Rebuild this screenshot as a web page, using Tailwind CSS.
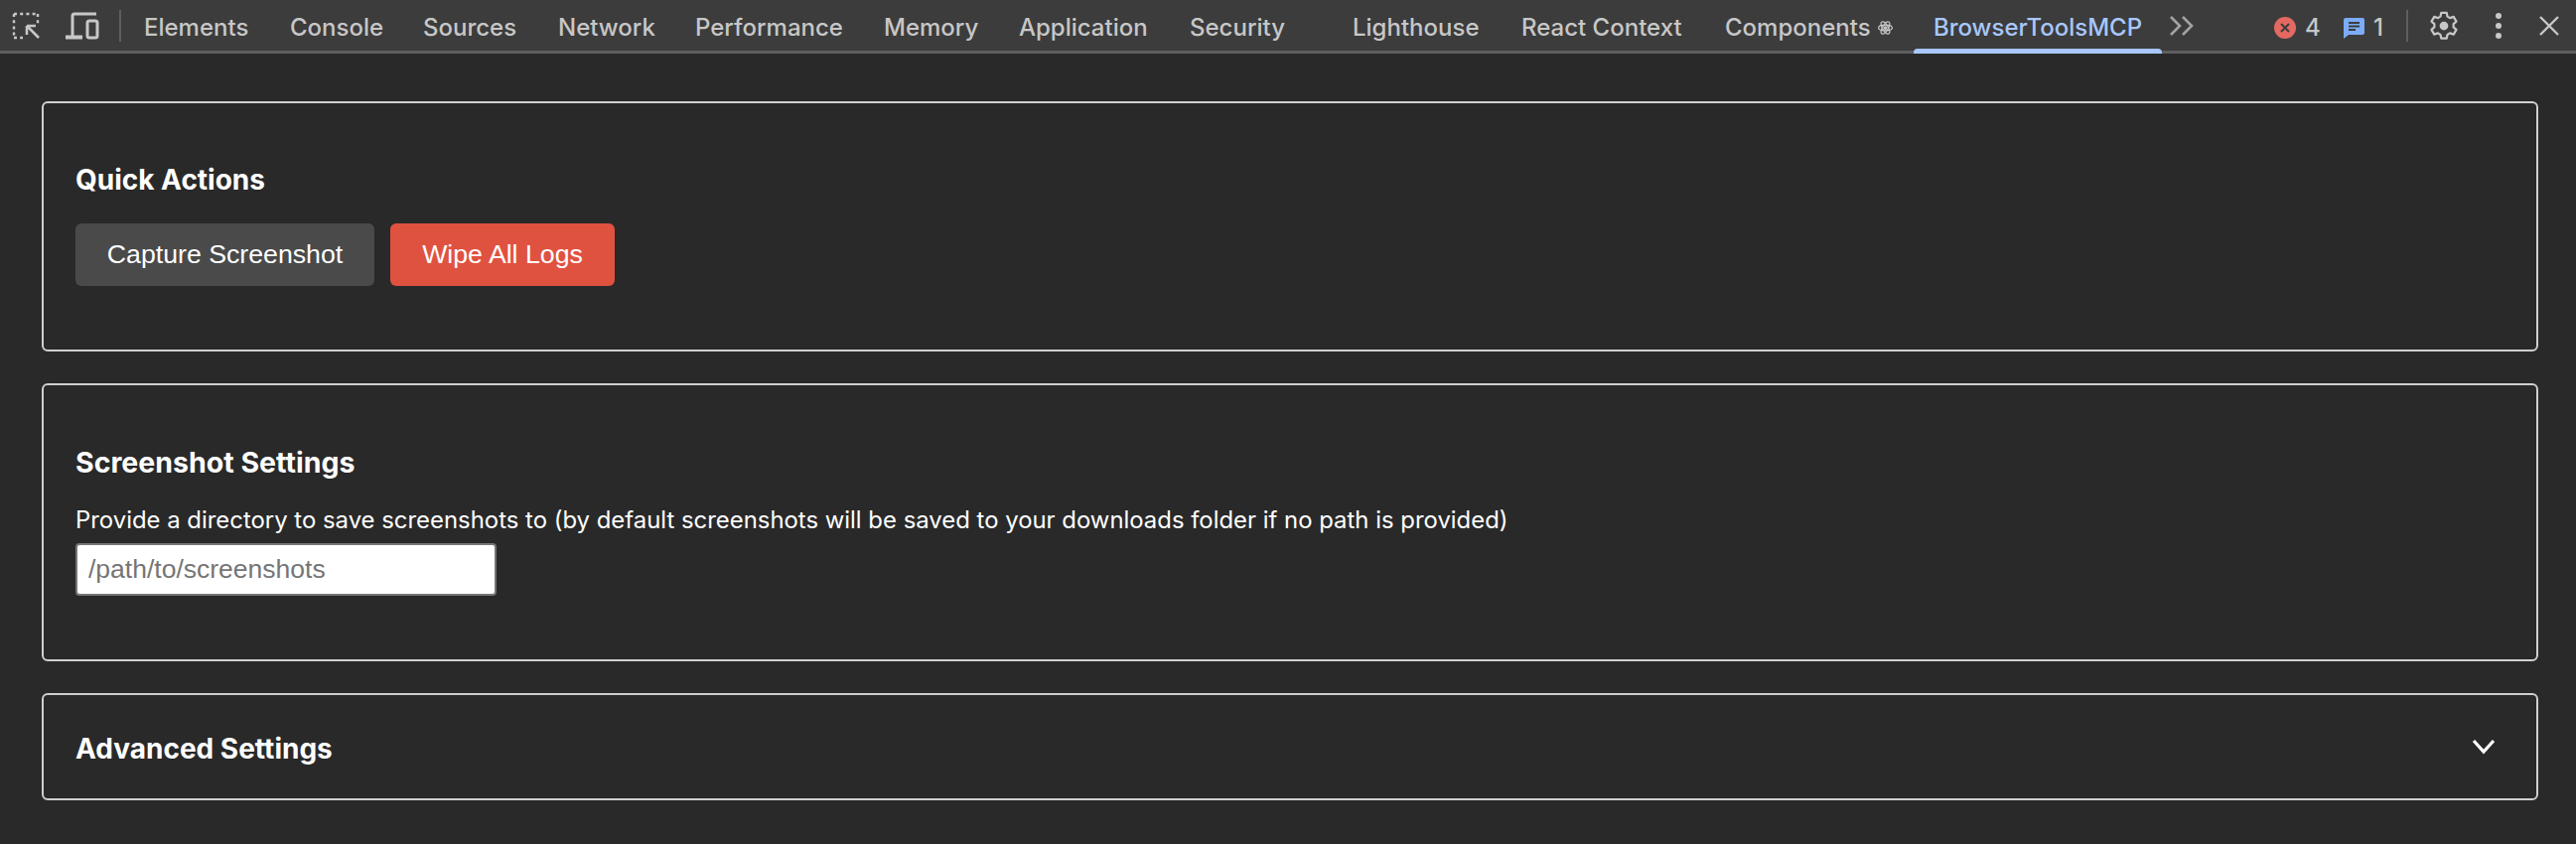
<!DOCTYPE html>
<html lang="en">
<head>
    <meta charset="UTF-8">
    <title>BrowserToolsMCP</title>
    <script src="https://cdn.jsdelivr.net/npm/@tailwindcss/browser@4"></script>
</head>
<body class="bg-[#292929] h-[850px] overflow-hidden font-['Inter',sans-serif]">
    <!-- devtools tab strip -->
    <div class="flex items-center h-[54px] bg-[#3c3c3c] border-b-[3px] border-[#5e5e5e] text-[#c7c7c7] text-[24px] font-medium">
        <div class="flex items-center w-[145px] h-full">
            <svg class="ml-[12px]" width="30" height="30" viewBox="0 0 30 30" fill="none" stroke="#c7c7c7" stroke-width="2.4">
                <path d="M2 3h24M2 3v24M26 3v11M2 27h9" stroke-dasharray="3 3.2"/>
                <path d="M27 27 15 15M15 15v9M15 15h9" stroke-width="2.6"/>
            </svg>
            <svg class="ml-[24px]" width="34" height="28" viewBox="0 0 34 28" fill="none" stroke="#c7c7c7" stroke-width="3">
                <path d="M7 26V4q0-2 2-2h22"/>
                <path d="M0 25.500h17" stroke-width="4"/>
                <rect x="22" y="9" width="10" height="17" rx="2"/>
            </svg>
            <div class="ml-[20px] w-[2px] h-[32px] bg-[#5e5e5e]"></div>
        </div>
        <div class="flex items-center h-full pt-[5px]">
            <div class="w-[147px]">Elements</div>
            <div class="w-[134px]">Console</div>
            <div class="w-[136px]">Sources</div>
            <div class="w-[138px]">Network</div>
            <div class="w-[190px]">Performance</div>
            <div class="w-[136px]">Memory</div>
            <div class="w-[172px]">Application</div>
            <div class="w-[164px]">Security</div>
            <div class="w-[170px]">Lighthouse</div>
            <div class="w-[205px]">React Context</div>
            <div class="w-[190px] flex items-center gap-[7px]">Components
                <svg width="15" height="16" viewBox="0 0 24 24" fill="none" stroke="#c7c7c7" stroke-width="2">
                    <circle cx="12" cy="12" r="2" fill="#c7c7c7"/>
                    <ellipse cx="12" cy="12" rx="11" ry="4.500"/>
                    <ellipse cx="12" cy="12" rx="11" ry="4.500" transform="rotate(60 12 12)"/>
                    <ellipse cx="12" cy="12" rx="11" ry="4.500" transform="rotate(120 12 12)"/>
                </svg>
            </div>
            <div class="relative w-[250px] h-full flex items-center justify-center text-[#a8c7fa]">BrowserToolsMCP
                <div class="absolute left-0 right-0 bottom-[-3px] h-[5px] bg-[#a8c7fa] rounded-t-[4px]"></div>
            </div>
        </div>
        <svg class="ml-[7px]" width="26" height="22" viewBox="0 0 26 22" fill="none" stroke="#a3a3a3" stroke-width="2.600">
            <path d="M2 2l9 9-9 9M14 2l9 9-9 9"/>
        </svg>
        <div class="flex items-center h-full pt-[5px]">
            <svg class="ml-[80px]" width="22" height="22" viewBox="0 0 22 22">
                <circle cx="11" cy="11" r="11" fill="#e46962"/>
                <path d="M7 7l8 8M15 7l-8 8" stroke="#3c3c3c" stroke-width="2"/>
            </svg>
            <span class="ml-[9px] w-[24px]">4</span>
            <svg class="ml-[15px]" width="21" height="21" viewBox="0 0 21 21">
                <path d="M2 0h17q2 0 2 2v13q0 2-2 2H5l-5 4V2q0-2 2-2z" fill="#7cacf8"/>
                <path d="M5 5h11M5 8.500h11M5 12h7" stroke="#3c3c3c" stroke-width="2"/>
            </svg>
            <span class="ml-[9px] w-[14px]">1</span>
        </div>
        <div class="ml-[19px] w-[2px] h-[32px] bg-[#5e5e5e]"></div>
        <svg class="ml-[21px]" width="30" height="30" viewBox="0 0 24 24" fill="none" stroke="#c7c7c7" stroke-width="1.800">
            <circle cx="12" cy="12" r="3.500" fill="#c7c7c7" stroke="none"/>
            <path d="M9.800 1.500h4.400l.6 3 2 1.200 3-1 2.200 3.800-2.300 2v2.600l2.300 2-2.200 3.800-3-1-2 1.200-.6 3H9.800l-.6-3-2-1.200-3 1-2.200-3.800 2.300-2v-2.600l-2.300-2 2.200-3.800 3 1 2-1.200z" stroke-linejoin="round"/>
        </svg>
        <svg class="ml-[37px]" width="6" height="26" viewBox="0 0 6 26" fill="#c7c7c7">
            <circle cx="3" cy="3" r="3"/><circle cx="3" cy="13" r="3"/><circle cx="3" cy="23" r="3"/>
        </svg>
        <svg class="ml-[37px]" width="22" height="22" viewBox="0 0 22 22" fill="none" stroke="#c7c7c7" stroke-width="2.400">
            <path d="M2 2l18 18M20 2 2 20"/>
        </svg>
    </div>

    <div class="flex flex-col gap-[32px] pt-[48px] pl-[42px] pr-[38px] text-white">
        <section class="h-[252px] border-2 border-[#cfcfcf] rounded-[6px] px-[32px] pt-[61px]">
            <h3 class="text-[28px] leading-[32px] font-bold">Quick Actions</h3>
            <div class="flex gap-[16px] mt-[28px] font-['Liberation_Sans',sans-serif] text-[26.700px]">
                <button class="w-[301px] h-[63px] rounded-[6px] bg-[#4a4a4a]">Capture Screenshot</button>
                <button class="w-[226px] h-[63px] rounded-[6px] bg-[#e05240]">Wipe All Logs</button>
            </div>
        </section>

        <section class="h-[280px] border-2 border-[#cfcfcf] rounded-[6px] px-[32px] pt-[62px]">
            <h3 class="text-[28.500px] leading-[32px] font-bold">Screenshot Settings</h3>
            <p class="mt-[26px] text-[23.900px] leading-[32px]">Provide a directory to save screenshots to (by default screenshots will be saved to your downloads folder if no path is provided)</p>
            <input type="text" placeholder="/path/to/screenshots" class="block mt-[7px] w-[424px] h-[53px] px-[11px] rounded-[4px] bg-white border-2 border-[#767676] text-[26.500px] font-['Liberation_Sans',sans-serif] placeholder:text-[#757575] outline-none">
        </section>

        <section class="h-[108px] border-2 border-[#cfcfcf] rounded-[6px] px-[32px] flex items-center justify-between">
            <h3 class="mt-[3px] text-[28px] leading-[32px] font-bold">Advanced Settings</h3>
            <svg class="mr-[9px]" width="24" height="16" viewBox="0 0 24 16" fill="none" stroke="#fff" stroke-width="3.200">
                <path d="M2 2l10 11L22 2"/>
            </svg>
        </section>
    </div>
</body>
</html>
